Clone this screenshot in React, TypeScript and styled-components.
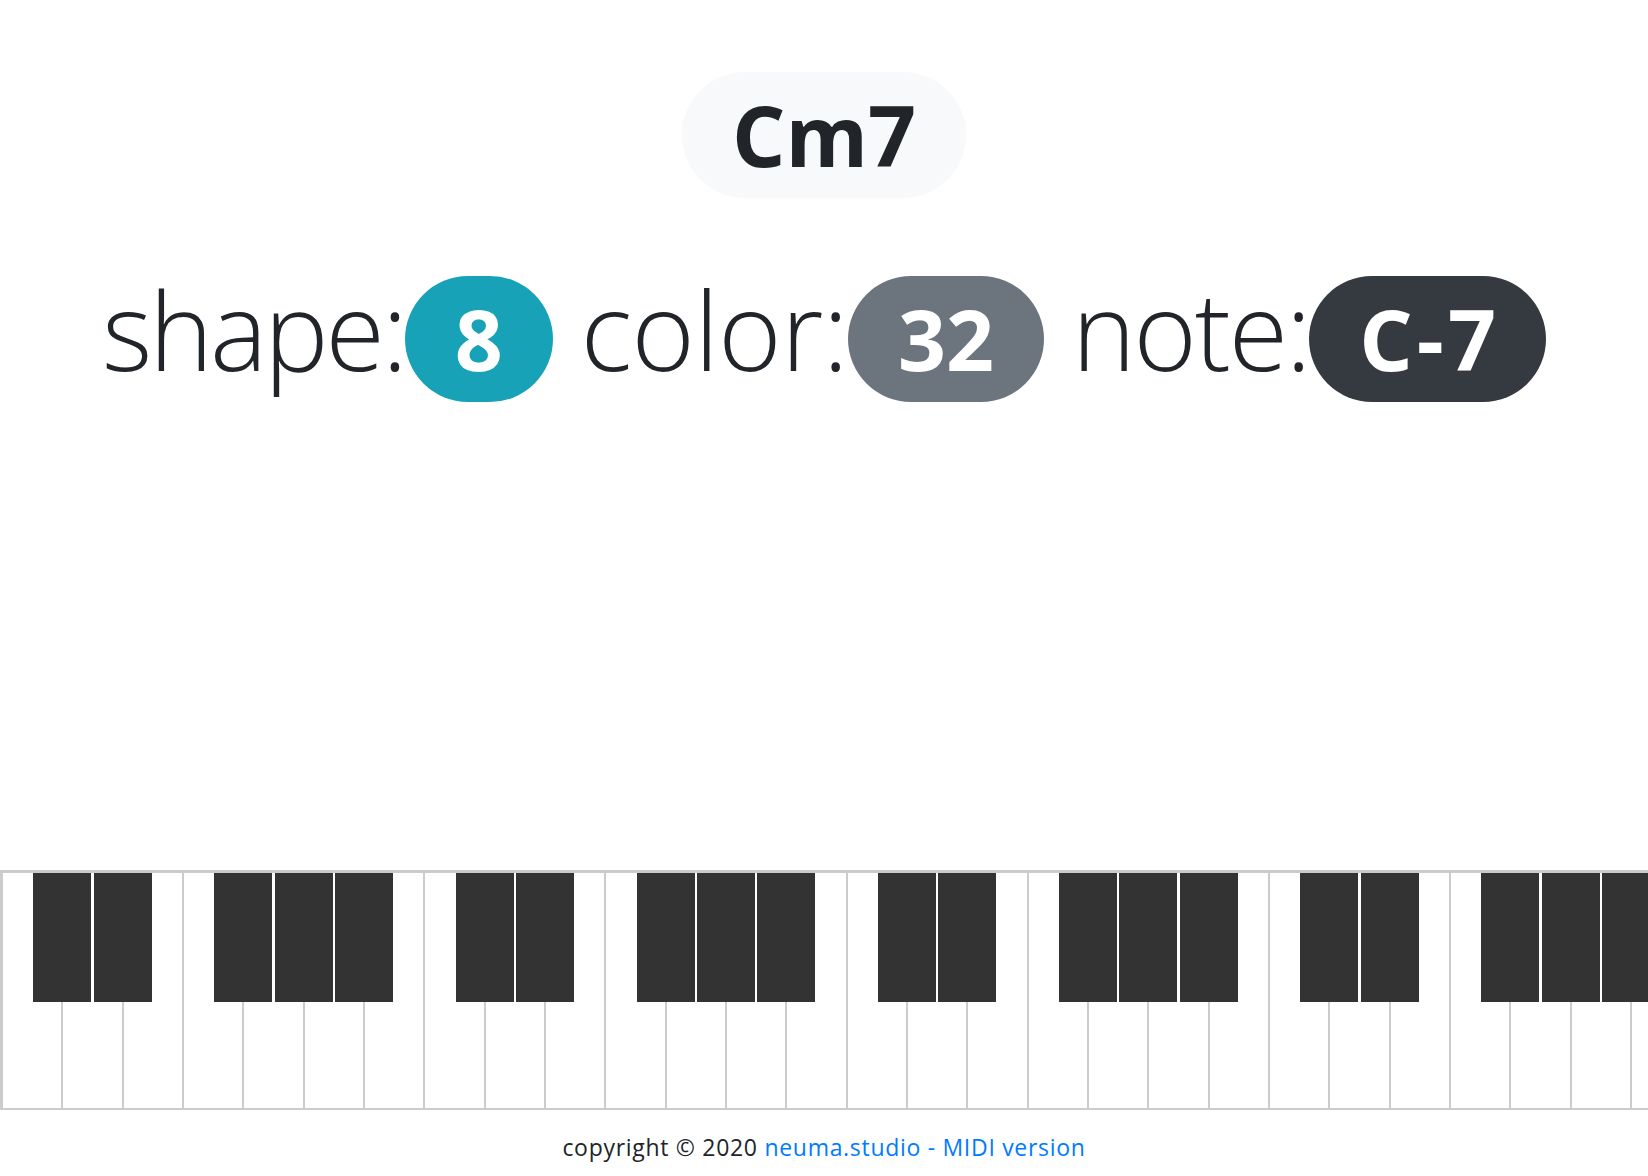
import React from "react";
import styled, { createGlobalStyle } from "styled-components";

const GlobalStyle = createGlobalStyle`
  html, body {
    margin: 0;
    padding: 0;
    background: #ffffff;
  }
  body {
    font-family: "Open Sans", "Noto Sans", "DejaVu Sans", sans-serif;
    color: #212529;
  }
`;

const Page = styled.div`
  display: flex;
  flex-direction: column;
  width: 100%;
  overflow: hidden;
`;

const TitleRow = styled.div`
  display: flex;
  justify-content: center;
  padding-top: 72px;
`;

const ChordBadge = styled.span`
  display: inline-block;
  font-size: 84px;
  font-weight: 700;
  line-height: 1;
  padding: 21px 50px;
  border-radius: 999px;
  background: #f8f9fa;
  color: #212529;
`;

const InfoLine = styled.div`
  margin-top: 67px;
  text-align: center;
  font-size: 108px;
  font-weight: 300;
  line-height: 1.2;
  white-space: nowrap;
`;

const Label = styled.span<{ $ls: number }>`
  font-weight: 300;
  letter-spacing: ${(p) => p.$ls}px;
`;

const Pill = styled.span<{ $bg: string; $ls?: number }>`
  display: inline-block;
  font-size: 84px;
  font-weight: 700;
  line-height: 1;
  padding: 21px 50px;
  border-radius: 999px;
  background: ${(p) => p.$bg};
  color: #ffffff;
  vertical-align: baseline;
  letter-spacing: ${(p) => p.$ls ?? 0}px;
`;

const PillText = styled.span`
  margin-right: -4px;
`;

const Keyboard = styled.div`
  position: relative;
  display: flex;
  margin-top: 468px;
  border-top: 1px solid #cccccc;
  border-left: 1px solid #cccccc;
  overflow: hidden;
  height: 239px;
`;

const WhiteKey = styled.div`
  flex: 0 0 60.333px;
  box-sizing: border-box;
  height: 239px;
  background: #ffffff;
  border-top: 2px solid #cccccc;
  border-bottom: 2px solid #cccccc;
  border-left: 2px solid #cccccc;
`;

const BlackKey = styled.div`
  position: absolute;
  top: 2px;
  width: 58px;
  height: 129px;
  background: #333333;
`;

const Footer = styled.footer`
  margin-top: 20px;
  text-align: center;
  font-size: 23px;
  line-height: 1.5;
  letter-spacing: 0.7px;
  color: #212529;
`;

const Link = styled.a`
  color: #007bff;
  text-decoration: none;
`;

const Blue = styled.span`
  color: #007bff;
`;

const WHITE_W = 60.333;
const OCTAVES = 4;
const BLACK_AFTER = [0, 1, 3, 4, 5];

export default function App() {
  const whites = Array.from({ length: OCTAVES * 7 }, (_, i) => i);
  const blacks: number[] = [];
  for (let o = 0; o < OCTAVES; o++) {
    for (const b of BLACK_AFTER) {
      const idx = o * 7 + b + 1;
      blacks.push(idx * WHITE_W + 1 - 29);
    }
  }
  return (
    <>
      <GlobalStyle />
      <Page>
        <TitleRow>
          <ChordBadge>Cm7</ChordBadge>
        </TitleRow>
        <InfoLine>
          <Label $ls={-3}>shape:</Label>
          <Pill $bg="#17a2b8">8</Pill> <Label $ls={-0.5}>color:</Label>
          <Pill $bg="#6c757d">32</Pill> <Label $ls={-2.2}>note:</Label>
          <Pill $bg="#343a40" $ls={4}>
            <PillText>C-7</PillText>
          </Pill>
        </InfoLine>
        <Keyboard>
          {whites.map((i) => (
            <WhiteKey key={i} />
          ))}
          {blacks.map((left, i) => (
            <BlackKey key={"b" + i} style={{ left }} />
          ))}
        </Keyboard>
        <Footer>
          copyright © 2020 <Link href="#">neuma.studio</Link>
          <Blue> - </Blue>
          <Link href="#">MIDI version</Link>
        </Footer>
      </Page>
    </>
  );
}
